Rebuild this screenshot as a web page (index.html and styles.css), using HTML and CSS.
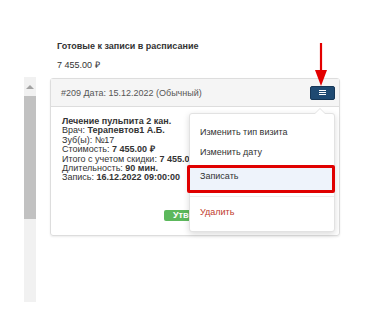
FILE: index.html
```html
<!DOCTYPE html>
<html lang="ru">
<head>
  <meta charset="UTF-8">
  <title>Готовые к записи</title>
  <link rel="stylesheet" href="styles.css">
</head>
<body>
  <div class="page">
    <div class="title">Готовые к записи в расписание</div>
    <div class="amount">7 455.00 ₽</div>

    <div class="content">
      <div class="scrollbar">
        <div class="scroll-up"></div>
        <div class="scroll-thumb"></div>
      </div>

      <div class="card">
        <div class="card-header">
          <span>#209 Дата: 15.12.2022 (Обычный)</span>
          <div class="menu-btn">
            <span></span><span></span><span></span>
          </div>
        </div>
        <div class="card-body">
          <p><b>Лечение пульпита 2 кан.</b></p>
          <p>Врач: <b>Терапевтов1 А.Б.</b></p>
          <p>Зуб(ы): №17</p>
          <p>Стоимость: <b>7 455.00 ₽</b></p>
          <p>Итого с учетом скидки: <b>7 455.00 ₽</b></p>
          <p>Длительность: <b>90 мин.</b></p>
          <p>Запись: <b>16.12.2022 09:00:00</b></p>
          <div class="approve">Утвердить</div>
        </div>

        <!-- dropdown menu -->
        <div class="dropdown">
          <div class="item">Изменить тип визита</div>
          <div class="item">Изменить дату</div>
          <div class="item active">Записать</div>
          <div class="divider"></div>
          <div class="item danger">Удалить</div>
          <div class="highlight"></div>
        </div>
      </div>
    </div>

    <!-- red arrow pointing at the menu button -->
    <svg class="arrow" width="14" height="44" viewBox="0 0 14 44">
      <line x1="7" y1="0" x2="7" y2="30" stroke="#e30000" stroke-width="2.2"/>
      <polygon points="1,27 13,27 7,43" fill="#e30000"/>
    </svg>
  </div>
</body>
</html>
```

FILE: styles.css
```css
* {
  margin: 0;
  padding: 0;
  box-sizing: border-box;
}

body {
  font-family: 'Liberation Sans', Arial, sans-serif;
  font-size: 9px;
  color: #333;
  background: #fff;
}

.page {
  position: relative;
  width: 387px;
  height: 330px;
  padding-top: 41px;
}

.title {
  margin-left: 57px;
  font-weight: bold;
  line-height: 11px;
}

.amount {
  margin-left: 57px;
  margin-top: 8px;
  line-height: 11px;
}

.content {
  display: flex;
  align-items: flex-start;
  margin-top: 6px;
}

/* fake scrollbar */
.scrollbar {
  margin-left: 24px;
  width: 12px;
  height: 225px;
  background: #f1f1f1;
  display: flex;
  flex-direction: column;
  align-items: center;
}

.scroll-up {
  margin-top: 8px;
  width: 0;
  height: 0;
  border-left: 4px solid transparent;
  border-right: 4px solid transparent;
  border-bottom: 4px solid #a3a3a3;
}

.scroll-thumb {
  margin-top: 7px;
  width: 12px;
  height: 123px;
  background: #c1c1c1;
}

.card {
  position: relative;
  margin-left: 14px;
  margin-top: 1px;
  width: 290px;
  height: 158px;
  border: 1px solid #ddd;
  border-radius: 3px;
  box-shadow: 0 1px 2px rgba(0, 0, 0, 0.08);
}

.card-header {
  height: 28px;
  background: #f5f5f5;
  border-bottom: 1px solid #ddd;
  display: flex;
  align-items: center;
  justify-content: space-between;
  padding: 0 4px 0 10px;
  color: #555;
}

.menu-btn {
  width: 25px;
  height: 14px;
  background: #1f4a72;
  border: 1px solid #163757;
  border-radius: 2px;
  display: flex;
  flex-direction: column;
  align-items: center;
  justify-content: center;
  gap: 1px;
}

.menu-btn span {
  display: block;
  width: 7px;
  height: 1px;
  background: #fff;
}

.card-body {
  padding: 10px 11px 0;
  line-height: 9.4px;
  white-space: nowrap;
  overflow: hidden;
}

.approve {
  display: inline-block;
  margin-top: 27px;
  margin-left: 102px;
  height: 11px;
  padding: 0 9px;
  line-height: 11px;
  background: #5cb85c;
  color: #fff;
  font-weight: bold;
  border-radius: 2px;
}

.dropdown {
  position: absolute;
  left: 138px;
  top: 34px;
  width: 146px;
  height: 119px;
  background: #fff;
  border: 1px solid #e2e2e2;
  border-radius: 3px;
  box-shadow: 0 2px 6px rgba(0, 0, 0, 0.15);
  padding-top: 8px;
}

.dropdown::before {
  content: "";
  position: absolute;
  top: -6px;
  right: 8px;
  width: 0;
  height: 0;
  border-left: 6px solid transparent;
  border-right: 6px solid transparent;
  border-bottom: 6px solid #e2e2e2;
}

.dropdown::after {
  content: "";
  position: absolute;
  top: -5px;
  right: 9px;
  width: 0;
  height: 0;
  border-left: 5px solid transparent;
  border-right: 5px solid transparent;
  border-bottom: 5px solid #fff;
}

.item {
  height: 20px;
  line-height: 20px;
  padding-left: 10px;
  color: #333;
}

.item.active {
  margin-top: 4px;
  height: 24px;
  line-height: 20px;
  background: #eef3fb;
}

.divider {
  height: 1px;
  margin: 6px 0 5px;
  background: #eee;
}

.item.danger {
  color: #c0392b;
}

/* red annotation frame round "Записать" */
.highlight {
  position: absolute;
  left: -3px;
  top: 51px;
  width: 148px;
  height: 28px;
  border: 3px solid #e00000;
  border-radius: 2px;
}

.arrow {
  position: absolute;
  left: 314px;
  top: 43px;
}
```
